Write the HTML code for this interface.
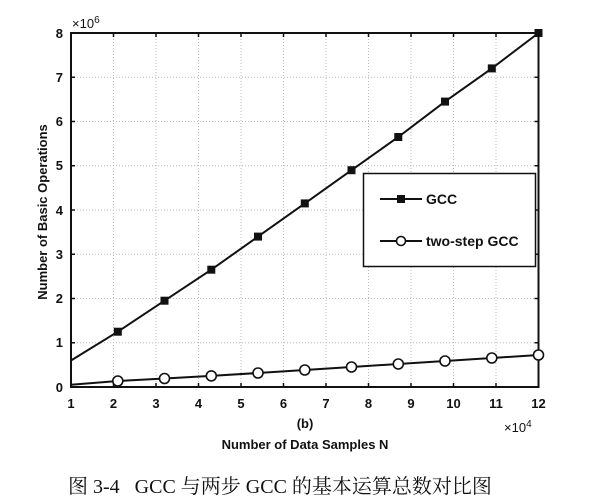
<!DOCTYPE html>
<html><head><meta charset="utf-8"><style>
html,body{margin:0;padding:0;background:#fff;width:599px;height:502px;overflow:hidden}
svg{display:block}
.t{font-family:"Liberation Sans",Arial,sans-serif;font-weight:bold;font-size:13px;fill:#111}
</style></head><body>
<svg width="599" height="502" viewBox="0 0 599 502" xmlns="http://www.w3.org/2000/svg">
<g stroke="#bbb" stroke-width="1" stroke-dasharray="1,2">
<line x1="113.5" y1="33" x2="113.5" y2="387"/><line x1="156" y1="33" x2="156" y2="387"/><line x1="198.5" y1="33" x2="198.5" y2="387"/><line x1="241" y1="33" x2="241" y2="387"/><line x1="283.5" y1="33" x2="283.5" y2="387"/><line x1="326" y1="33" x2="326" y2="387"/><line x1="368.5" y1="33" x2="368.5" y2="387"/><line x1="411" y1="33" x2="411" y2="387"/><line x1="453.5" y1="33" x2="453.5" y2="387"/><line x1="496" y1="33" x2="496" y2="387"/>
<line x1="71" y1="77.25" x2="538.5" y2="77.25"/><line x1="71" y1="121.5" x2="538.5" y2="121.5"/><line x1="71" y1="165.75" x2="538.5" y2="165.75"/><line x1="71" y1="210" x2="538.5" y2="210"/><line x1="71" y1="254.25" x2="538.5" y2="254.25"/><line x1="71" y1="298.5" x2="538.5" y2="298.5"/><line x1="71" y1="342.75" x2="538.5" y2="342.75"/>
</g>
<g stroke="#111" stroke-width="1.5">
<path d="M113.5 387v-4M156 387v-4M198.5 387v-4M241 387v-4M283.5 387v-4M326 387v-4M368.5 387v-4M411 387v-4M453.5 387v-4M496 387v-4"/>
<path d="M113.5 33v4M156 33v4M198.5 33v4M241 33v4M283.5 33v4M326 33v4M368.5 33v4M411 33v4M453.5 33v4M496 33v4"/>
<path d="M71 77.25h4M71 121.5h4M71 165.75h4M71 210h4M71 254.25h4M71 298.5h4M71 342.75h4"/>
<path d="M538.5 77.25h-4M538.5 121.5h-4M538.5 165.75h-4M538.5 210h-4M538.5 254.25h-4M538.5 298.5h-4M538.5 342.75h-4"/>
</g>
<rect x="71" y="33" width="467.5" height="354" fill="none" stroke="#111" stroke-width="2"/>
<polyline fill="none" stroke="#111" stroke-width="2" points="71,360.5 117.8,331.7 164.5,300.7 211.3,269.7 258,236.6 304.8,203.4 351.5,170.2 398.3,137 445,101.6 491.8,68.4 538.5,33"/>
<g fill="#111">
<rect x="113.8" y="327.7" width="8" height="8"/><rect x="160.5" y="296.7" width="8" height="8"/><rect x="207.3" y="265.7" width="8" height="8"/><rect x="254" y="232.6" width="8" height="8"/><rect x="300.8" y="199.4" width="8" height="8"/><rect x="347.5" y="166.2" width="8" height="8"/><rect x="394.3" y="133" width="8" height="8"/><rect x="441" y="97.6" width="8" height="8"/><rect x="487.8" y="64.4" width="8" height="8"/><rect x="534.5" y="29" width="8" height="8"/>
</g>
<polyline fill="none" stroke="#111" stroke-width="2" points="71,384.8 117.8,381 164.5,378.5 211.3,375.9 258,373 304.8,370 351.5,367 398.3,364 445,361 491.8,358 538.5,355"/>
<g fill="#fff" stroke="#111" stroke-width="1.6">
<circle cx="117.8" cy="381" r="5"/><circle cx="164.5" cy="378.5" r="5"/><circle cx="211.3" cy="375.9" r="5"/><circle cx="258" cy="373" r="5"/><circle cx="304.8" cy="370" r="5"/><circle cx="351.5" cy="367" r="5"/><circle cx="398.3" cy="364" r="5"/><circle cx="445" cy="361" r="5"/><circle cx="491.8" cy="358" r="5"/><circle cx="538.5" cy="355" r="5"/>
</g>
<rect x="363.5" y="173.5" width="172" height="93" fill="#fff" stroke="#111" stroke-width="1.5"/>
<line x1="380" y1="199" x2="422" y2="199" stroke="#111" stroke-width="2"/>
<rect x="397" y="195" width="8" height="8" fill="#111"/>
<text class="t" x="426" y="204" style="font-size:14px">GCC</text>
<line x1="380" y1="241" x2="422" y2="241" stroke="#111" stroke-width="2"/>
<circle cx="401" cy="241" r="4.5" fill="#fff" stroke="#111" stroke-width="1.6"/>
<text class="t" x="426" y="246" style="font-size:14px">two-step GCC</text>
<g class="t" text-anchor="end">
<text x="63" y="38">8</text><text x="63" y="82">7</text><text x="63" y="126">6</text><text x="63" y="170">5</text><text x="63" y="215">4</text><text x="63" y="259">3</text><text x="63" y="303">2</text><text x="63" y="347">1</text><text x="63" y="392">0</text>
</g>
<g class="t" text-anchor="middle">
<text x="71" y="408">1</text><text x="113.5" y="408">2</text><text x="156" y="408">3</text><text x="198.5" y="408">4</text><text x="241" y="408">5</text><text x="283.5" y="408">6</text><text x="326" y="408">7</text><text x="368.5" y="408">8</text><text x="411" y="408">9</text><text x="453.5" y="408">10</text><text x="496" y="408">11</text><text x="538.5" y="408">12</text>
<text x="305" y="428">(b)</text>
<text x="305" y="449">Number of Data Samples N</text>
<text transform="translate(47,212) rotate(-90)">Number of Basic Operations</text>
</g>
<text x="72" y="28" style="font-family:'Liberation Sans',sans-serif;font-size:13px;fill:#111">×10<tspan dy="-5" font-size="10">6</tspan></text>
<text x="504" y="432" style="font-family:'Liberation Sans',sans-serif;font-size:13px;fill:#111">×10<tspan dy="-5" font-size="10">4</tspan></text>
<text x="68" y="493" style="font-family:'Liberation Serif','Noto Serif CJK SC',serif;font-size:20px;fill:#111;white-space:pre" xml:space="preserve">图 3-4   GCC 与两步 GCC 的基本运算总数对比图</text>
</svg>
</body></html>
